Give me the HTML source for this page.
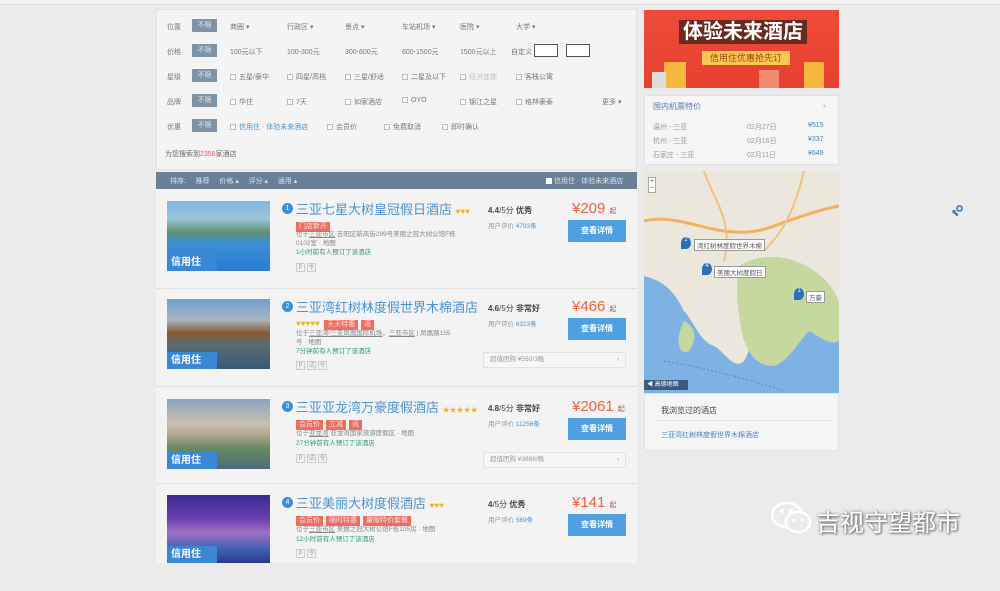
<!DOCTYPE html>
<html><head><meta charset="utf-8"><style>
*{margin:0;padding:0;box-sizing:border-box}
body{width:1000px;height:563px;overflow:hidden;background:#ebebeb;font-family:"Liberation Sans","Noto Sans CJK SC",sans-serif;position:relative;color:#555}
.a{position:absolute;white-space:nowrap}
.f{font-size:7px;color:#777}
.all{position:absolute;left:192px;width:25px;height:13px;background:#7f93a6;color:#dfe6ee;font-size:7px;text-align:center;line-height:13px}
.cb{display:inline-block;width:6px;height:6px;border:1px solid #bbb;background:#fff;margin-right:3px;vertical-align:-1px}
.row{position:absolute;left:156px;width:481px;height:96px}
.img{position:absolute;left:11px;top:0;width:103px;height:70px}
.xy{position:absolute;left:0;bottom:0;width:50px;height:17px;background:#3a87d6;color:#fff;font-size:10px;font-weight:bold;line-height:17px;padding-left:4px}
.num{position:absolute;left:126px;top:2px;width:11px;height:11px;border-radius:50%;background:#3b8fd9;color:#fff;font-size:7px;text-align:center;line-height:11px}
.nm{position:absolute;left:140px;top:-2px;font-size:13px;color:#4a93d4}
.tag{display:inline-block;background:#ee6e5e;color:#fde;font-size:7px;padding:0 3px;height:10px;line-height:10px;margin-right:3px}
.tg{position:absolute;left:140px;top:14px}
.ad{position:absolute;left:140px;font-size:6.5px;color:#888}
.gr{position:absolute;left:140px;font-size:6.5px;color:#2e9c6a}
.ic{position:absolute;left:140px;font-size:6px;color:#999}
.ic span{display:inline-block;border:1px solid #ccc;width:9px;height:9px;line-height:8px;text-align:center;margin-right:2px}
.sc{position:absolute;left:332px;top:4px;font-size:8px;color:#444}
.sc b{font-size:8px}
.rv{position:absolute;left:332px;top:19px;font-size:6.5px;color:#999}
.rv i{font-style:normal;color:#4a93d4}
.pr{position:absolute;left:416px;top:-1px;font-size:15px;color:#f0603c}
.pr s{text-decoration:none;font-size:7px;color:#a55}
.bt{position:absolute;left:412px;top:19px;width:58px;height:22px;background:#4ea0e2;color:#fff;font-size:8px;font-weight:bold;text-align:center;line-height:22px}
.ex{position:absolute;left:327px;top:53px;width:143px;height:16px;border:1px solid #e2e2e2;font-size:6.5px;color:#999;line-height:14px;padding-left:6px;background:#f6f6f6}
.sep{position:absolute;left:156px;width:481px;height:1px;background:#e0e0e0}
</style></head><body>
<div class="a" style="left:0;top:0;width:1000px;height:5px;background:#f4f4f4;border-bottom:1px solid #ddd"></div>

<!-- filter panel -->
<div class="a" style="left:156px;top:9px;width:481px;height:161px;background:#f4f4f4;border:1px solid #e3e3e3"></div>
<div class="a f" style="left:167px;top:22px">位置</div><div class="all" style="top:19px">不限</div>
<div class="a f" style="left:230px;top:22px">商圈 ▾</div><div class="a f" style="left:287px;top:22px">行政区 ▾</div><div class="a f" style="left:345px;top:22px">景点 ▾</div><div class="a f" style="left:402px;top:22px">车站机场 ▾</div><div class="a f" style="left:460px;top:22px">医院 ▾</div><div class="a f" style="left:516px;top:22px">大学 ▾</div>
<div class="a f" style="left:167px;top:47px">价格</div><div class="all" style="top:44px">不限</div>
<div class="a f" style="left:230px;top:47px">100元以下</div><div class="a f" style="left:287px;top:47px">100-300元</div><div class="a f" style="left:345px;top:47px">300-600元</div><div class="a f" style="left:402px;top:47px">600-1500元</div><div class="a f" style="left:460px;top:47px">1500元以上</div><div class="a f" style="left:511px;top:47px">自定义</div>
<div class="a" style="left:534px;top:44px;width:24px;height:13px;border:1px solid #555;background:#fff"></div><div class="a" style="left:566px;top:44px;width:24px;height:13px;border:1px solid #555;background:#fff"></div>
<div class="a f" style="left:167px;top:72px">星级</div><div class="all" style="top:69px">不限</div>
<div class="a f" style="left:230px;top:72px"><span class="cb"></span>五星/豪华</div><div class="a f" style="left:287px;top:72px"><span class="cb"></span>四星/高档</div><div class="a f" style="left:345px;top:72px"><span class="cb"></span>三星/舒适</div><div class="a f" style="left:402px;top:72px"><span class="cb"></span>二星及以下</div><div class="a f" style="left:460px;top:72px;color:#bbb"><span class="cb"></span>经济连锁</div><div class="a f" style="left:516px;top:72px"><span class="cb"></span>客栈公寓</div>
<div class="a f" style="left:167px;top:97px">品牌</div><div class="all" style="top:94px">不限</div>
<div class="a f" style="left:230px;top:97px"><span class="cb"></span>华住</div><div class="a f" style="left:287px;top:97px"><span class="cb"></span>7天</div><div class="a f" style="left:345px;top:97px"><span class="cb"></span>如家酒店</div><div class="a f" style="left:402px;top:97px"><span class="cb"></span>OYO</div><div class="a f" style="left:460px;top:97px"><span class="cb"></span>锦江之星</div><div class="a f" style="left:516px;top:97px"><span class="cb"></span>格林豪泰</div><div class="a f" style="left:602px;top:97px">更多 ▾</div>
<div class="a f" style="left:167px;top:122px">优惠</div><div class="all" style="top:119px">不限</div>
<div class="a f" style="left:230px;top:122px;color:#4a93d4"><span class="cb"></span>信用住 · 体验未来酒店</div><div class="a f" style="left:327px;top:122px"><span class="cb"></span>会员价</div><div class="a f" style="left:384px;top:122px"><span class="cb"></span>免费取消</div><div class="a f" style="left:442px;top:122px"><span class="cb"></span>即时确认</div>
<div class="a f" style="left:165px;top:149px;color:#666">为您搜索到<span style="color:#e55">2356</span>家酒店</div>

<!-- sort bar -->
<div class="a" style="left:156px;top:172px;width:481px;height:17px;background:#6a8096"></div>
<div class="a" style="left:170px;top:176px;font-size:7px;color:#dbe3ea">排序:&nbsp;&nbsp;&nbsp;&nbsp;&nbsp;推荐&nbsp;&nbsp;&nbsp;&nbsp;&nbsp;价格 ▴&nbsp;&nbsp;&nbsp;&nbsp;&nbsp;评分 ▴&nbsp;&nbsp;&nbsp;&nbsp;&nbsp;通用 ▴</div>
<div class="a" style="left:546px;top:176px;font-size:7px;color:#dbe3ea"><span style="display:inline-block;width:6px;height:6px;background:#fff;vertical-align:-1px"></span> 信用住 · 体验未来酒店</div>

<!-- list background -->
<div class="a" style="left:156px;top:189px;width:481px;height:374px;background:#f3f3f3"></div>
<div class="sep" style="top:288px"></div><div class="sep" style="top:386px"></div><div class="sep" style="top:483px"></div>

<div class="row" style="top:201px">
<div class="img" style="background:linear-gradient(180deg,#7fb4e0 0%,#9cc6da 25%,#5f8f70 45%,#3d8fd6 60%,#2a7dd0 100%)"><div class="xy">信用住</div></div>
<div class="num">1</div><div class="nm">三亚七星大树皇冠假日酒店 <span style="font-size:8px;color:#f0b020">♥♥♥</span></div>
<div class="tg"><span class="tag">门店新开</span></div>
<div class="ad" style="top:27px">位于<u>三亚市区</u> 吉阳区新风街299号美丽之冠大树公馆F栋</div>
<div class="ad" style="top:36px">0102室 · 地图</div>
<div class="gr" style="top:45px">1小时前有人预订了该酒店</div>
<div class="ic" style="top:62px"><span>P</span><span>令</span></div>
<div class="sc"><b>4.4</b>/5分 <b>优秀</b></div><div class="rv">用户评价 <i>4793条</i></div>
<div class="pr">¥209 <s>起</s></div><div class="bt">查看详情</div>
</div>

<div class="row" style="top:299px">
<div class="img" style="background:linear-gradient(180deg,#6c9fd0 0%,#a9b6c0 30%,#8a5a30 48%,#5a6b70 65%,#3a5a78 100%)"><div class="xy">信用住</div></div>
<div class="num">2</div><div class="nm">三亚湾红树林度假世界木棉酒店</div>
<div class="tg"><span style="font-size:8px;color:#f0b020">♥♥♥♥♥</span> <span class="tag">天天特惠</span><span class="tag">返</span></div>
<div class="ad" style="top:28px">位于<u>三亚湾/三亚凤凰国际机场</u>，<u>三亚市区</u> | 凤凰路155</div>
<div class="ad" style="top:37px">号 · 地图</div>
<div class="gr" style="top:46px">7分钟前有人预订了该酒店</div>
<div class="ic" style="top:62px"><span>P</span><span>试</span><span>令</span></div>
<div class="sc"><b>4.6</b>/5分 <b>非常好</b></div><div class="rv">用户评价 <i>6323条</i></div>
<div class="pr">¥466 <s>起</s></div><div class="bt">查看详情</div>
<div class="ex">超值团购 ¥550/3晚<span style="float:right;margin-right:6px">›</span></div>
</div>

<div class="row" style="top:399px">
<div class="img" style="background:linear-gradient(180deg,#8aa3bf 0%,#c8c0b0 35%,#b4a890 50%,#6a8a60 70%,#4a6a80 100%)"><div class="xy">信用住</div></div>
<div class="num">3</div><div class="nm">三亚亚龙湾万豪度假酒店 <span style="font-size:7px;color:#f0b020">★★★★★</span></div>
<div class="tg"><span class="tag">会员价</span><span class="tag">立减</span><span class="tag">返</span></div>
<div class="ad" style="top:28px">位于<u>亚龙湾</u> 亚龙湾国家旅游度假区 · 地图</div>
<div class="gr" style="top:38px">27分钟前有人预订了该酒店</div>
<div class="ic" style="top:55px"><span>P</span><span>试</span><span>令</span></div>
<div class="sc"><b>4.8</b>/5分 <b>非常好</b></div><div class="rv">用户评价 <i>11256条</i></div>
<div class="pr">¥2061 <s>起</s></div><div class="bt">查看详情</div>
<div class="ex">超值团购 ¥3888/晚<span style="float:right;margin-right:6px">›</span></div>
</div>

<div class="row" style="top:495px">
<div class="img" style="height:68px;background:linear-gradient(180deg,#3a2a90 0%,#6a40b0 35%,#a070c0 55%,#4060b0 80%,#2a3a8a 100%)"><div class="xy">信用住</div></div>
<div class="num">4</div><div class="nm">三亚美丽大树度假酒店 <span style="font-size:8px;color:#f0b020">♥♥♥</span></div>
<div class="tg"><span class="tag">会员价</span><span class="tag">限时特惠</span><span class="tag">量贩特价套餐</span></div>
<div class="ad" style="top:28px">位于<u>三亚市区</u> 美丽之冠大树公馆F栋105房 · 地图</div>
<div class="gr" style="top:38px">12小时前有人预订了该酒店</div>
<div class="ic" style="top:54px"><span>P</span><span>令</span></div>
<div class="sc"><b>4</b>/5分 <b>优秀</b></div><div class="rv">用户评价 <i>569条</i></div>
<div class="pr">¥141 <s>起</s></div><div class="bt">查看详情</div>
</div>

<!-- right column -->
<div class="a" style="left:644px;top:10px;width:195px;height:78px;background:linear-gradient(180deg,#ee4a3a,#e8402f);overflow:hidden">
<div class="a" style="left:35px;top:10px;font-size:20px;font-weight:bold;color:#fff;background:#6a2a20;padding:0 4px;line-height:24px">体验未来酒店</div>
<div class="a" style="left:58px;top:41px;font-size:9px;color:#a04010;background:#f8c850;padding:0 8px;line-height:14px">信用住优惠抢先订</div>
<div class="a" style="left:20px;top:52px;width:22px;height:26px;background:#f8b840"></div>
<div class="a" style="left:8px;top:62px;width:14px;height:16px;background:#ddd"></div>
<div class="a" style="left:115px;top:60px;width:20px;height:18px;background:#f08a70"></div>
<div class="a" style="left:160px;top:52px;width:20px;height:26px;background:#f8b840"></div>
</div>
<div class="a" style="left:644px;top:95px;width:195px;height:70px;background:#f5f5f5;border:1px solid #e3e3e3"></div>
<div class="a" style="left:653px;top:101px;font-size:8px;color:#5a7ab0">国内机票特价</div><div class="a" style="left:823px;top:101px;font-size:8px;color:#aaa">›</div>
<div class="a f" style="left:653px;top:122px;color:#999">温州 - 三亚</div><div class="a f" style="left:747px;top:122px;color:#999">02月27日</div><div class="a f" style="left:808px;top:122px;color:#4a80c0">¥515</div>
<div class="a f" style="left:653px;top:136px;color:#999">杭州 - 三亚</div><div class="a f" style="left:747px;top:136px;color:#999">02月16日</div><div class="a f" style="left:808px;top:136px;color:#4a80c0">¥337</div>
<div class="a f" style="left:653px;top:150px;color:#999">石家庄 - 三亚</div><div class="a f" style="left:747px;top:150px;color:#999">02月11日</div><div class="a f" style="left:808px;top:150px;color:#4a80c0">¥649</div>

<div class="a" style="left:644px;top:171px;width:195px;height:222px;background:#7eb2e4;overflow:hidden">
<svg width="195" height="222" style="position:absolute;left:0;top:0">
<path d="M0 0H195V150C180 160 170 150 165 135C150 130 140 150 120 140C105 150 110 175 100 190C90 200 80 180 70 175C55 170 50 150 40 140C30 120 20 110 0 105Z" fill="#ece7dc"/>
<path d="M95 95C120 80 150 85 170 100C185 110 190 120 195 130V170C185 175 175 165 165 160C155 170 145 190 130 195C110 195 105 180 100 170C95 150 90 120 95 95Z" fill="#c6d79f"/>
<path d="M40 150C50 155 55 165 45 180C35 185 30 170 40 150Z" fill="#c6d79f"/>
<path d="M0 50C40 40 80 75 130 55C150 48 170 40 195 35" stroke="#f2b060" stroke-width="3" fill="none"/>
<path d="M60 0C70 30 90 50 80 90M160 0C150 40 140 60 120 80" stroke="#f2c080" stroke-width="2" fill="none"/>
<path d="M20 190Q80 200 140 220" stroke="#5a8ac0" stroke-dasharray="2 2" fill="none"/>
</svg>
<div class="a" style="left:4px;top:6px;width:8px;height:16px;background:#fff;border:1px solid #aaa;font-size:7px;line-height:7px;text-align:center">+<br>−</div>
<div class="a" style="left:37px;top:66px;width:10px;height:12px;border-radius:50% 50% 50% 0;background:#2a6fb8;color:#fff;font-size:6px;text-align:center">2</div>
<div class="a" style="left:50px;top:68px;font-size:6.5px;background:#fff;border:1px solid #999;padding:0 2px">湾红树林度假世界木棉</div>
<div class="a" style="left:58px;top:92px;width:10px;height:12px;border-radius:50% 50% 50% 0;background:#2a6fb8;color:#fff;font-size:6px;text-align:center">4</div>
<div class="a" style="left:70px;top:95px;font-size:6.5px;background:#fff;border:1px solid #999;padding:0 2px">美丽大树度假日</div>
<div class="a" style="left:150px;top:117px;width:10px;height:12px;border-radius:50% 50% 50% 0;background:#2a6fb8;color:#fff;font-size:6px;text-align:center">1</div>
<div class="a" style="left:162px;top:120px;font-size:6.5px;background:#fff;border:1px solid #999;padding:0 2px">万豪</div>
<div class="a" style="left:0;top:209px;width:44px;height:10px;background:#3a5a80;color:#fff;font-size:6px;line-height:10px;padding-left:3px">◀ 高德地图</div>
</div>
<div class="a" style="left:644px;top:393px;width:195px;height:58px;background:#f5f5f5;border:1px solid #e3e3e3"></div>
<div class="a" style="left:661px;top:405px;font-size:8px;color:#444">我浏览过的酒店</div>
<div class="a" style="left:654px;top:420px;width:178px;height:1px;background:#e3e3e3"></div>
<div class="a" style="left:661px;top:430px;font-size:7px;color:#4a80c0">三亚湾红树林度假世界木棉酒店</div>

<!-- cursor -->
<div class="a" style="left:951px;top:208px;font-size:10px;color:#5a6a8a">⬉</div>
<div class="a" style="left:956px;top:205px;width:7px;height:7px;border:2px solid #4a90d0;border-radius:50%"></div>

<!-- watermark -->
<svg class="a" style="left:770px;top:500px" width="44" height="36"><ellipse cx="17" cy="15" rx="15" ry="12" fill="none" stroke="#fff" stroke-width="2.5"/><ellipse cx="28" cy="22" rx="12" ry="10" fill="#ebebeb" stroke="#fff" stroke-width="2.5"/><circle cx="12" cy="11" r="2" fill="#fff"/><circle cx="21" cy="11" r="2" fill="#fff"/><circle cx="24" cy="20" r="1.5" fill="#fff"/><circle cx="32" cy="20" r="1.5" fill="#fff"/></svg>
<div class="a" style="left:816px;top:503px;font-size:24px;color:#fff;text-shadow:0 0 3px #777,1px 1px 2px #666">吉视守望都市</div>
</body></html>
